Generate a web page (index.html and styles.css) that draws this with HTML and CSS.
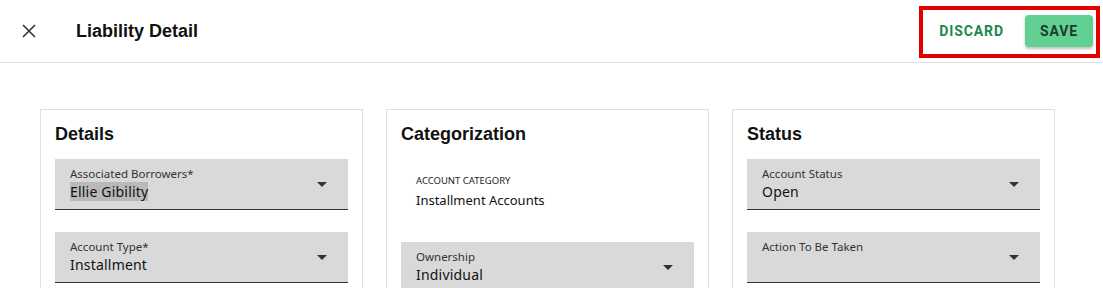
FILE: index.html
```html
<!DOCTYPE html>
<html lang="en">
<head>
    <meta charset="UTF-8">
    <meta name="viewport" content="width=device-width, initial-scale=1.0">
    <title>Liability Detail</title>
    <link rel="stylesheet" href="styles.css">
</head>
<body>

<div class="page">
    <header class="topbar">
        <button class="close-btn" aria-label="Close">
            <svg width="14" height="14" viewBox="0 0 14 14"><path d="M1 1L13 13M13 1L1 13" stroke="#333" stroke-width="1.6" fill="none"/></svg>
        </button>
        <h1 class="title">Liability Detail</h1>
        <div class="actions">
            <button class="btn-text">DISCARD</button>
            <button class="btn-save">SAVE</button>
        </div>
    </header>

    <main class="cards">
        <section class="card">
            <h2 class="card-title">Details</h2>
            <div class="field">
                <div class="field-body">
                    <span class="field-label">Associated Borrowers*</span>
                    <span class="field-value"><span class="selected">Ellie Gibility</span></span>
                </div>
                <span class="arrow"></span>
            </div>
            <div class="field">
                <div class="field-body">
                    <span class="field-label">Account Type*</span>
                    <span class="field-value">Installment</span>
                </div>
                <span class="arrow"></span>
            </div>
        </section>

        <section class="card">
            <h2 class="card-title">Categorization</h2>
            <div class="readonly">
                <span class="readonly-label">ACCOUNT CATEGORY</span>
                <span class="readonly-value">Installment Accounts</span>
            </div>
            <div class="field">
                <div class="field-body">
                    <span class="field-label">Ownership</span>
                    <span class="field-value">Individual</span>
                </div>
                <span class="arrow"></span>
            </div>
        </section>

        <section class="card">
            <h2 class="card-title">Status</h2>
            <div class="field">
                <div class="field-body">
                    <span class="field-label">Account Status</span>
                    <span class="field-value">Open</span>
                </div>
                <span class="arrow"></span>
            </div>
            <div class="field">
                <div class="field-body">
                    <span class="field-label">Action To Be Taken</span>
                    <span class="field-value"></span>
                </div>
                <span class="arrow"></span>
            </div>
        </section>
    </main>
</div>

</body>
</html>
```

FILE: styles.css
```css
body {
    margin: 0;
    padding: 0;
    font-family: "Liberation Sans", Arial, sans-serif;
    background-color: #fff;
    color: #111;
}

.page {
    height: 100vh;
    overflow: hidden;
}

.topbar {
    display: flex;
    align-items: center;
    height: 62px;
    border-bottom: 1px solid #e2e2e2;
}

.close-btn {
    background: none;
    border: none;
    padding: 0;
    margin-left: 22px;
    width: 14px;
    height: 14px;
    display: flex;
    cursor: pointer;
}

.title {
    margin: 0 0 0 40px;
    font-size: 18px;
    font-weight: bold;
    color: #111;
    flex: 1;
}

.actions {
    display: flex;
    align-items: center;
    gap: 21px;
    border: 4px solid #e20000;
    padding: 5px 3px 7px 16px;
    margin-right: 3px;
    margin-top: 2px;
}

.btn-text {
    background: none;
    border: none;
    padding: 8px 0;
    font-family: Roboto, sans-serif;
    font-weight: 700;
    font-size: 14px;
    letter-spacing: 0.9px;
    color: #1b8a4c;
    cursor: pointer;
}

.btn-save {
    background-color: #62d092;
    border: none;
    border-radius: 4px;
    height: 32px;
    padding: 0 15px;
    font-family: Roboto, sans-serif;
    font-weight: 700;
    font-size: 14px;
    letter-spacing: 0.9px;
    color: #1d3a2b;
    box-shadow: 0 2px 3px rgba(0, 0, 0, 0.25);
    cursor: pointer;
}

.cards {
    display: flex;
    gap: 23px;
    padding: 46px 0 0 40px;
}

.card {
    box-sizing: border-box;
    width: 323px;
    height: 300px;
    border: 1px solid #e0e0e0;
    padding: 13px 14px 0 14px;
}

.card-title {
    margin: 0 0 14px 0;
    font-size: 18px;
    line-height: 22px;
    font-weight: bold;
    color: #111;
}

.field {
    display: flex;
    align-items: center;
    height: 50px;
    background-color: #d9d9d9;
    border-bottom: 1px solid #333;
    padding: 0 21px 0 15px;
    margin-bottom: 22px;
    font-family: "Noto Sans", "Open Sans", sans-serif;
}

.field-body {
    flex: 1;
    display: flex;
    flex-direction: column;
    align-self: flex-start;
    padding-top: 7px;
}

.field-label {
    font-size: 11.5px;
    line-height: 16px;
    color: #333;
}

.field-value {
    font-size: 14px;
    line-height: 20px;
    height: 20px;
    color: #111;
    letter-spacing: 0.2px;
}

.selected {
    background-color: #b9b9b9;
}

.arrow {
    width: 0;
    height: 0;
    border-left: 5px solid transparent;
    border-right: 5px solid transparent;
    border-top: 5px solid #333;
}

.readonly {
    box-sizing: border-box;
    display: flex;
    flex-direction: column;
    padding: 15px 15px 0 15px;
    height: 61px;
    margin-bottom: 22px;
    font-family: "Noto Sans", "Open Sans", sans-serif;
}

.readonly-label {
    font-size: 9.5px;
    line-height: 14px;
    color: #222;
}

.readonly-value {
    margin-top: 3px;
    font-size: 13px;
    line-height: 18px;
    color: #111;
}
```
